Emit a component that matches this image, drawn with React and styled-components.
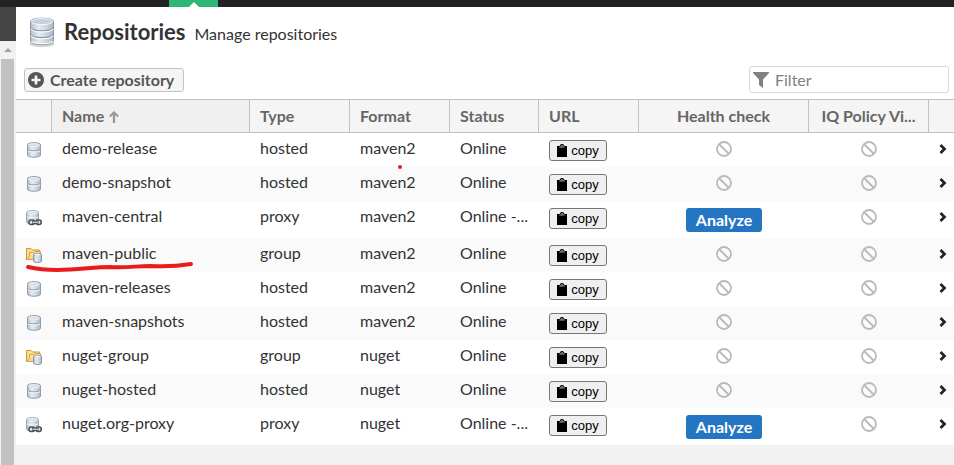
import React from 'react';
import styled, { createGlobalStyle } from 'styled-components';

const Global = createGlobalStyle`
  * { box-sizing: border-box; }
  html, body, #root { height: 100%; }
  body {
    margin: 0;
    background: #f2f2f2;
    color: #333;
    font: 16px/18px Lato, "Open Sans", sans-serif;
    overflow: hidden;
  }
`;

const Page = styled.div`
  display: flex;
  flex-direction: column;
  min-height: 100vh;
`;

const TopBar = styled.header`
  display: flex;
  height: 7px;
  padding-left: 169px;
  background: #222;
`;

const ActiveTab = styled.div`
  display: flex;
  justify-content: center;
  align-items: flex-end;
  width: 49px;
  background: #2cb678;
  svg { display: block; }
`;

const Body = styled.div`
  display: flex;
  flex: 1;
`;

const Side = styled.aside`
  display: flex;
  flex-direction: column;
  flex: 0 0 16px;
  background: #444;
`;

const Scroll = styled.div`
  display: flex;
  flex-direction: column;
  flex: 1;
  margin-top: 34px;
  padding: 0 2px 0 1px;
  background: #f1f1f1;
`;

const ScrollUp = styled.div`
  display: flex;
  justify-content: center;
  align-items: center;
  height: 18px;
`;

const Thumb = styled.div`
  flex: 1;
  background: #c1c1c1;
`;

const Main = styled.main`
  position: relative;
  flex: 1;
  min-width: 0;
`;

const Top = styled.div`
  background: #fff;
`;

const Heading = styled.div`
  display: flex;
  align-items: center;
  height: 50px;
  padding-left: 10px;
`;

const Title = styled.h1`
  margin: 0 9px 0 6px;
  font-size: 22px;
  line-height: 26px;
  font-weight: 700;
  color: #333;
`;

const Subtitle = styled.span`
  padding-top: 3px;
`;

const Toolbar = styled.div`
  display: flex;
  align-items: center;
  justify-content: space-between;
  height: 42px;
  padding: 3px 5px 0 8px;
`;

const CreateButton = styled.button`
  display: flex;
  align-items: center;
  gap: 6px;
  height: 24px;
  padding: 0 9px 0 3px;
  border: 1px solid #c2c2c2;
  border-radius: 3px;
  background: #f5f5f5;
  color: #555;
  font: inherit;
  font-weight: 700;
`;

const FilterBox = styled.label`
  display: flex;
  align-items: center;
  gap: 6px;
  width: 200px;
  height: 27px;
  padding: 0 3px;
  border: 1px solid #d8d8d8;
  border-radius: 3px;
  background: #fff;
`;

const FilterInput = styled.input`
  flex: 1;
  min-width: 0;
  padding: 0;
  border: 0;
  outline: 0;
  background: none;
  font: inherit;
  &::placeholder { color: #808080; opacity: 1; }
`;

const Table = styled.table`
  width: 100%;
  table-layout: fixed;
  border-collapse: separate;
  border-spacing: 0;
  background: #fff;
`;

const Col = styled.col`
  width: ${(p) => p.$w};
`;

const Th = styled.th`
  height: 34px;
  padding: 0 10px;
  border: solid #c2c2c2;
  border-width: 1px 1px 1px 0;
  background: ${(p) => (p.$sorted ? '#f0f0f0' : '#f5f5f5')};
  color: #666;
  font-weight: 700;
  text-align: ${(p) => (p.$center ? 'center' : 'left')};
  white-space: nowrap;
  overflow: hidden;
  text-overflow: ellipsis;
  &:last-child { border-right: 0; }
  svg { margin-left: 5px; vertical-align: -1px; }
`;

const Row = styled.tr`
  background: ${(p) => (p.$alt ? '#fafafa' : '#fff')};
`;

const Td = styled.td`
  padding: 6px 10px;
  vertical-align: top;
  white-space: nowrap;
  overflow: hidden;
  text-overflow: ellipsis;
  svg { display: block; }
`;

const IconCell = styled(Td)`
  padding: 9px 0 0 10px;
`;

const MarkCell = styled(Td)`
  padding-top: 8px;
  svg { margin: 0 auto; }
`;

const ActionCell = styled(Td)`
  padding-top: 7px;
`;

const ArrowCell = styled(Td)`
  padding: 11px 0 0 10px;
`;

const CopyButton = styled.button`
  display: flex;
  align-items: center;
  justify-content: center;
  gap: 4px;
  width: 58px;
  height: 21px;
  padding: 0;
  border: 1px solid #767676;
  border-radius: 3px;
  background: #efefef;
  color: #000;
  font: 13px/15px "Liberation Sans", Arial, sans-serif;
`;

const AnalyzeButton = styled.button`
  display: block;
  width: 76px;
  height: 24px;
  margin: 0 auto;
  padding: 0;
  border: 0;
  border-radius: 3px;
  background: #2476c3;
  color: #fff;
  font: inherit;
  font-weight: 700;
`;

const Marks = styled.svg`
  position: absolute;
  left: 0;
  top: 0;
  pointer-events: none;
`;

const GradientDefs = styled.svg`
  display: block;
  flex: none;
`;

const Gradients = () => (
  <GradientDefs width="0" height="0" aria-hidden="true">
    <defs>
      <linearGradient id="steel" x1="0" x2="1">
        <stop offset="0" stopColor="#b4bfcc" />
        <stop offset=".35" stopColor="#e6ebf1" />
        <stop offset=".7" stopColor="#ccd5df" />
        <stop offset="1" stopColor="#a9b5c3" />
      </linearGradient>
      <linearGradient id="folder" x1="0" y1="0" x2="0" y2="1">
        <stop offset="0" stopColor="#fdf0bd" />
        <stop offset="1" stopColor="#f8d077" />
      </linearGradient>
    </defs>
  </GradientDefs>
);

const BigDatabase = () => (
  <svg width="32" height="32" viewBox="0 0 32 32" aria-hidden="true">
    <ellipse cx="16" cy="28" rx="12.500" ry="3.200" fill="#bbb" opacity=".6" />
    <path d="M4.500 5.500C4.500 1 27.500 1 27.500 5.500V25C27.500 30 4.500 30 4.500 25Z" fill="url(#steel)" stroke="#8e9aa8" />
    <ellipse cx="16" cy="5.600" rx="10.500" ry="3" fill="#c5d0da" stroke="#f4f7fa" />
    <path d="M4.500 11.500C6 15.800 26 15.800 27.500 11.500M4.500 18.300C6 22.600 26 22.600 27.500 18.300" fill="none" stroke="#8593a3" strokeWidth="1.200" />
    <path d="M5 12.800C7 17 25 17 27 12.800M5 19.600C7 23.800 25 23.800 27 19.600M5.500 25.200C8 28.600 24 28.600 26.500 25.200" fill="none" stroke="#fafcff" strokeWidth="1.100" />
  </svg>
);

const HostedIcon = () => (
  <svg width="16" height="16" viewBox="0 0 16 16" aria-hidden="true">
    <path d="M1.500 2.500C1.500 0 14.500 0 14.500 2.500V13C14.500 16 1.500 16 1.500 13Z" fill="url(#steel)" stroke="#929eab" />
    <ellipse cx="8" cy="3.200" rx="5.500" ry="1.500" fill="#d5dde6" stroke="#eef2f6" strokeWidth=".8" />
    <path d="M1.500 7.400C3 9.400 13 9.400 14.500 7.400" fill="none" stroke="#8996a5" />
    <path d="M2 8.600C4 10.400 12 10.400 14 8.600" fill="none" stroke="#fff" strokeWidth=".9" />
  </svg>
);

const ProxyIcon = () => (
  <svg width="16" height="16" viewBox="0 0 16 16" aria-hidden="true">
    <path d="M.5 2.500C.5 0 12.500 0 12.500 2.500V12C12.500 14.500 .5 14.500 .5 12Z" fill="url(#steel)" stroke="#9aa6b3" />
    <ellipse cx="6.500" cy="2.700" rx="5" ry="1.300" fill="#d5dde6" stroke="#eef2f6" strokeWidth=".8" />
    <path d="M1 6.800C3 8.500 10 8.500 12 6.800" fill="none" stroke="#f5f8fb" />
    <rect x="3" y="10" width="5.500" height="4.500" rx="2" fill="#e0e0e0" stroke="#505050" strokeWidth="1.600" />
    <rect x="10" y="10" width="5.200" height="4.500" rx="2" fill="#e0e0e0" stroke="#505050" strokeWidth="1.600" />
    <path d="M6 12.250H12.500" stroke="#505050" strokeWidth="3" />
    <path d="M6.500 12.250H12" stroke="#ddd" strokeWidth="1.200" />
  </svg>
);

const GroupIcon = () => (
  <svg width="16" height="16" viewBox="0 0 16 16" aria-hidden="true">
    <path d="M.5 12.500V1.500H5L6.500 3H13.500V12.500Z" fill="#f9dc93" stroke="#d6962f" />
    <path d="M.8 12.500L3.500 9V5.500H7.500L8.500 4.500H14.500V12.500Z" fill="url(#folder)" stroke="#dda33f" />
    <path d="M7.500 7.500C7.500 5.600 15.500 5.600 15.500 7.500V14C15.500 16 7.500 16 7.500 14Z" fill="url(#steel)" stroke="#8b99a9" />
    <ellipse cx="11.500" cy="7.600" rx="3" ry=".8" fill="#eff3f7" />
  </svg>
);

const BanIcon = () => (
  <svg width="16" height="16" viewBox="0 0 16 16" fill="none" stroke="#bababa" strokeWidth="1.800" role="img" aria-label="Unavailable">
    <circle cx="8" cy="8" r="7" />
    <path d="M3 3L13 13" />
  </svg>
);

const ChevronIcon = () => (
  <svg width="8" height="10" viewBox="0 0 8 10" fill="none" stroke="#222" strokeWidth="2.700" aria-hidden="true">
    <path d="M1.500 1L5.500 5L1.500 9" />
  </svg>
);

const ClipboardIcon = () => (
  <svg width="10" height="13" viewBox="0 0 10 13" aria-hidden="true">
    <path d="M0 2H2.500L3.500 .5Q5 -.6 6.500 .5L7.500 2H10V13H0Z" fill="#000" />
    <path d="M2 3.600H8L7 2.300H3Z" fill="#999" />
    <circle cx="5" cy="1.500" r=".6" fill="#efefef" />
  </svg>
);

const PlusIcon = () => (
  <svg width="16" height="16" viewBox="0 0 16 16" aria-hidden="true">
    <circle cx="8" cy="8" r="8" fill="#555" />
    <path d="M8 3.500V12.500M3.500 8H12.500" stroke="#f5f5f5" strokeWidth="2.600" />
  </svg>
);

const FunnelIcon = () => (
  <svg width="16" height="16" viewBox="0 0 16 16" aria-hidden="true">
    <path d="M0 0H16V1L10 7.500V16L6 13V7.500L0 1Z" fill="#808080" />
  </svg>
);

const SortIcon = () => (
  <svg width="10" height="12" viewBox="0 0 10 12" aria-hidden="true">
    <path d="M5 12V3" stroke="#999" strokeWidth="2.400" />
    <path d="M.8 5.500L5 1.500L9.200 5.500" fill="none" stroke="#999" strokeWidth="2.200" />
  </svg>
);

const icons = { hosted: HostedIcon, proxy: ProxyIcon, group: GroupIcon };

const repositories = [
  ['demo-release', 'hosted', 'maven2'],
  ['demo-snapshot', 'hosted', 'maven2'],
  ['maven-central', 'proxy', 'maven2'],
  ['maven-public', 'group', 'maven2'],
  ['maven-releases', 'hosted', 'maven2'],
  ['maven-snapshots', 'hosted', 'maven2'],
  ['nuget-group', 'group', 'nuget'],
  ['nuget-hosted', 'hosted', 'nuget'],
  ['nuget.org-proxy', 'proxy', 'nuget'],
];

function RepositoryRow({ name, type, format, alt }) {
  const Icon = icons[type];
  const proxy = type === 'proxy';
  return (
    <Row $alt={alt}>
      <IconCell><Icon /></IconCell>
      <Td>{name}</Td>
      <Td>{type}</Td>
      <Td>{format}</Td>
      <Td>{proxy ? 'Online -...' : 'Online'}</Td>
      <ActionCell><CopyButton type="button"><ClipboardIcon />copy</CopyButton></ActionCell>
      {proxy
        ? <ActionCell><AnalyzeButton type="button">Analyze</AnalyzeButton></ActionCell>
        : <MarkCell><BanIcon /></MarkCell>}
      <MarkCell><BanIcon /></MarkCell>
      <ArrowCell><ChevronIcon /></ArrowCell>
    </Row>
  );
}

export default function App() {
  return (
    <Page>
      <Global />
      <Gradients />
      <TopBar>
        <ActiveTab>
          <svg width="10" height="5" aria-hidden="true"><path d="M0 5L5 0L10 5Z" fill="#fff" /></svg>
        </ActiveTab>
      </TopBar>
      <Body>
        <Side>
          <Scroll>
            <ScrollUp>
              <svg width="8" height="4" aria-hidden="true"><path d="M0 4L4 0L8 4Z" fill="#a3a3a3" /></svg>
            </ScrollUp>
            <Thumb />
          </Scroll>
        </Side>
        <Main>
          <Top>
            <Heading>
              <BigDatabase />
              <Title>Repositories</Title>
              <Subtitle>Manage repositories</Subtitle>
            </Heading>
            <Toolbar>
              <CreateButton type="button"><PlusIcon />Create repository</CreateButton>
              <FilterBox>
                <FunnelIcon />
                <FilterInput type="text" placeholder="Filter" aria-label="Filter" />
              </FilterBox>
            </Toolbar>
          </Top>
          <Table>
            <colgroup>
              <Col $w="36px" />
              <Col $w="auto" />
              <Col $w="100px" />
              <Col $w="100px" />
              <Col $w="89px" />
              <Col $w="100px" />
              <Col $w="170px" />
              <Col $w="120px" />
              <Col $w="25px" />
            </colgroup>
            <thead>
              <tr>
                <Th />
                <Th $sorted>Name<SortIcon /></Th>
                <Th>Type</Th>
                <Th>Format</Th>
                <Th>Status</Th>
                <Th>URL</Th>
                <Th $center>Health check</Th>
                <Th $center>IQ Policy Vi...</Th>
                <Th />
              </tr>
            </thead>
            <tbody>
              {repositories.map(([name, type, format], i) => (
                <RepositoryRow key={name} name={name} type={type} format={format} alt={i % 2 === 1} />
              ))}
            </tbody>
          </Table>
          <Marks width="400" height="280" fill="none" stroke="#e81c1c" aria-hidden="true">
            <path d="M12 260Q25 263 41 263C62 263 78 260 94 260C112 261 120 259 134 259C150 260 163 259 175 257" strokeWidth="4" strokeLinecap="round" />
            <circle cx="384" cy="160" r="2" fill="#e81c1c" stroke="none" />
          </Marks>
        </Main>
      </Body>
    </Page>
  );
}
